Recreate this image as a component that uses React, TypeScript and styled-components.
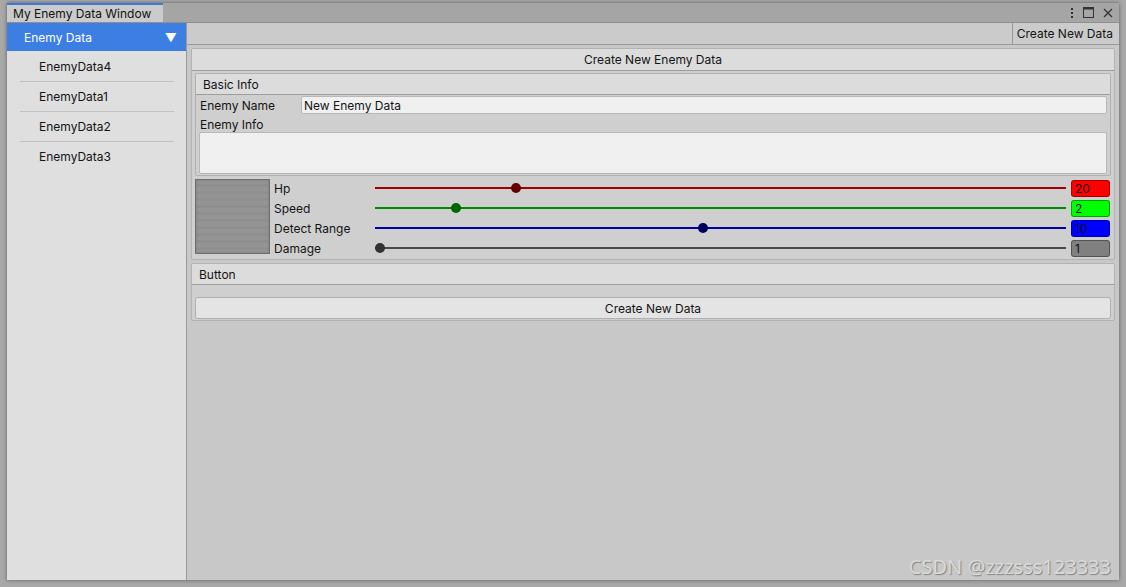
import React from "react";
import styled, { createGlobalStyle } from "styled-components";

const GlobalStyle = createGlobalStyle`
  body {
    margin: 0;
    background: #9c9c9c;
    font-family: Inter, "Noto Sans", sans-serif;
    font-size: 12px;
    color: #141414;
  }
`;

type Stat = {
  label: string;
  value: number;
  min: number;
  max: number;
  line: string;
  knob: string;
  box: string;
};

const stats: Stat[] = [
  { label: "Hp", value: 20, min: 0, max: 100, line: "#a00000", knob: "#650000", box: "#ff0000" },
  { label: "Speed", value: 2, min: 1, max: 10, line: "#008a00", knob: "#006400", box: "#00ff00" },
  { label: "Detect Range", value: 10, min: 1, max: 20, line: "#0000a8", knob: "#000060", box: "#0000ff" },
  { label: "Damage", value: 1, min: 1, max: 100, line: "#4a4a4a", knob: "#333333", box: "#808080" },
];

const items = ["EnemyData4", "EnemyData1", "EnemyData2", "EnemyData3"];

export default function App() {
  return (
    <Page>
      <GlobalStyle />
      <Window>
        <TitleBar>
          <Tab>My Enemy Data Window</Tab>
          <WindowIcons>
            <svg width="4" height="12" viewBox="0 0 4 12">
              <rect x="1" y="1" width="2" height="2" fill="#333" />
              <rect x="1" y="5" width="2" height="2" fill="#333" />
              <rect x="1" y="9" width="2" height="2" fill="#333" />
            </svg>
            <svg width="11" height="11" viewBox="0 0 11 11">
              <rect x="0.5" y="0.5" width="10" height="10" fill="none" stroke="#333" />
              <rect x="0.5" y="0.5" width="10" height="2" fill="#333" />
            </svg>
            <svg width="10" height="10" viewBox="0 0 10 10">
              <path d="M1 1 L9 9 M9 1 L1 9" stroke="#333" strokeWidth="1.3" />
            </svg>
          </WindowIcons>
        </TitleBar>
        <Body>
          <Sidebar>
            <Selected>
              <span>Enemy Data</span>
              <Arrow>▼</Arrow>
            </Selected>
            <List>
              {items.map((it) => (
                <ListItem key={it}>{it}</ListItem>
              ))}
            </List>
          </Sidebar>
          <Main>
            <Toolbar>
              <ToolButton>Create New Data</ToolButton>
            </Toolbar>
            <Content>
              <Box>
                <CenterHeader>Create New Enemy Data</CenterHeader>
                <InnerBox>
                  <Header>Basic Info</Header>
                  <FieldRow>
                    <Label>Enemy Name</Label>
                    <TextField>New Enemy Data</TextField>
                  </FieldRow>
                  <InfoLabel>Enemy Info</InfoLabel>
                  <TextArea />
                </InnerBox>
                <StatsRow>
                  <Portrait />
                  <StatList>
                    {stats.map((s) => {
                      const p = (s.value - s.min) / (s.max - s.min);
                      return (
                        <StatLine key={s.label}>
                          <StatLabel>{s.label}</StatLabel>
                          <Track $color={s.line}>
                            <Knob $color={s.knob} style={{ left: `calc(${p} * (100% - 10px))` }} />
                          </Track>
                          <ValueBox $bg={s.box}>{s.value}</ValueBox>
                        </StatLine>
                      );
                    })}
                  </StatList>
                </StatsRow>
              </Box>
              <Box>
                <Header>Button</Header>
                <ButtonArea>
                  <WideButton>Create New Data</WideButton>
                </ButtonArea>
              </Box>
            </Content>
            <Watermark>CSDN @zzzsss123333</Watermark>
          </Main>
        </Body>
      </Window>
    </Page>
  );
}

const Page = styled.div`
  width: 1126px;
  height: 587px;
  padding: 3px 0 0 7px;
  box-sizing: border-box;
  overflow: hidden;
  background: #a8a8a8;
`;

const Window = styled.div`
  width: 1112px;
  height: 577px;
  display: flex;
  flex-direction: column;
  box-shadow: 0 0 4px rgba(0, 0, 0, 0.45);
`;

const TitleBar = styled.div`
  height: 19px;
  background: #a5a5a5;
  display: flex;
  align-items: stretch;
  border-bottom: 1px solid #8f8f8f;
`;

const Tab = styled.div`
  width: 150px;
  padding-left: 6px;
  background: #cbcbcb;
  border-top: 2px solid #3a79d8;
  display: flex;
  align-items: center;
  font-size: 12px;
  color: #111;
`;

const WindowIcons = styled.div`
  margin-left: auto;
  display: flex;
  align-items: center;
  gap: 9px;
  padding-right: 6px;
`;

const Body = styled.div`
  flex: 1;
  display: flex;
  min-height: 0;
`;

const Sidebar = styled.div`
  width: 179px;
  background: #dfdfdf;
  border-right: 1px solid #9a9a9a;
  display: flex;
  flex-direction: column;
`;

const Selected = styled.div`
  height: 28px;
  background: #3d7ee3;
  color: #fff;
  display: flex;
  align-items: center;
  padding: 0 9px 0 17px;
  font-size: 12px;
`;

const Arrow = styled.span`
  margin-left: auto;
  font-size: 12px;
`;

const List = styled.div`
  padding-top: 1px;
`;

const ListItem = styled.div`
  height: 29px;
  margin: 0 12px 0 13px;
  padding-left: 19px;
  display: flex;
  align-items: center;
  border-bottom: 1px solid #c2c2c2;
  font-size: 12px;
  &:last-child {
    border-bottom: none;
  }
`;

const Main = styled.div`
  flex: 1;
  background: #c8c8c8;
  display: flex;
  flex-direction: column;
  position: relative;
`;

const Toolbar = styled.div`
  height: 21px;
  background: #cbcbcb;
  border-bottom: 1px solid #999;
  display: flex;
  justify-content: flex-end;
`;

const ToolButton = styled.div`
  padding: 0 6px 0 4px;
  border-left: 1px solid #999;
  display: flex;
  align-items: center;
  font-size: 12px;
`;

const Content = styled.div`
  padding: 3px 4px;
  display: flex;
  flex-direction: column;
  gap: 3px;
`;

const Box = styled.div`
  background: #cfcfcf;
  border: 1px solid #b2b2b2;
  border-radius: 2px;
`;

const Header = styled.div`
  height: 20px;
  background: #dcdcdc;
  border-bottom: 1px solid #9e9e9e;
  display: flex;
  align-items: center;
  padding-left: 7px;
  font-size: 12px;
`;

const CenterHeader = styled(Header)`
  justify-content: center;
  padding-left: 0;
  height: 21px;
`;

const InnerBox = styled.div`
  margin: 2px 3px 0;
  background: #cfcfcf;
  border: 1px solid #b2b2b2;
  border-radius: 2px;
  padding-bottom: 1px;
`;

const FieldRow = styled.div`
  display: flex;
  align-items: center;
  height: 18px;
  margin-top: 1px;
`;

const Label = styled.div`
  width: 105px;
  padding-left: 4px;
  box-sizing: border-box;
  font-size: 12px;
`;

const TextField = styled.div`
  flex: 1;
  height: 16px;
  margin-right: 3px;
  background: #f0f0f0;
  border: 1px solid #b8b8b8;
  border-radius: 2px;
  padding-left: 2px;
  display: flex;
  align-items: center;
  font-size: 12px;
`;

const InfoLabel = styled.div`
  height: 16px;
  padding-left: 4px;
  display: flex;
  align-items: center;
  margin-top: 2px;
`;

const TextArea = styled.div`
  height: 40px;
  margin: 0 3px;
  background: #f0f0f0;
  border: 1px solid #b8b8b8;
  border-radius: 2px;
`;

const StatsRow = styled.div`
  display: flex;
  padding: 2px 3px 1px;
  gap: 4px;
`;

const Portrait = styled.div`
  width: 73px;
  height: 73px;
  margin-top: 1px;
  border: 1px solid #6f6f6f;
  background: repeating-linear-gradient(
    180deg,
    #949494 0,
    #949494 4px,
    #8f8f8f 4px,
    #8f8f8f 7px
  );
  box-shadow: inset 0 0 2px rgba(0, 0, 0, 0.25);
`;

const StatList = styled.div`
  flex: 1;
  display: flex;
  flex-direction: column;
`;

const StatLine = styled.div`
  height: 20px;
  display: flex;
  align-items: center;
`;

const StatLabel = styled.div`
  width: 101px;
  font-size: 12px;
`;

const Track = styled.div<{ $color: string }>`
  flex: 1;
  height: 2px;
  background: ${(p) => p.$color};
  position: relative;
  margin-right: 5px;
`;

const Knob = styled.div<{ $color: string }>`
  position: absolute;
  top: -4px;
  width: 10px;
  height: 10px;
  border-radius: 50%;
  background: ${(p) => p.$color};
`;

const ValueBox = styled.div<{ $bg: string }>`
  width: 39px;
  height: 17px;
  box-sizing: border-box;
  background: ${(p) => p.$bg};
  border: 1px solid rgba(0, 0, 0, 0.35);
  border-radius: 3px;
  padding-left: 3px;
  display: flex;
  align-items: center;
  font-size: 12px;
  color: #111;
  margin-right: 1px;
`;

const ButtonArea = styled.div`
  padding: 12px 3px 1px;
`;

const WideButton = styled.div`
  height: 20px;
  background: #e4e4e4;
  border: 1px solid #b0b0b0;
  border-radius: 3px;
  display: flex;
  align-items: center;
  justify-content: center;
  font-size: 12px;
`;

const Watermark = styled.div`
  position: absolute;
  right: 8px;
  bottom: 0px;
  font-family: "Noto Sans", "DejaVu Sans", sans-serif;
  font-size: 20px;
  color: #dadada;
  text-shadow: 1px 1px 1px rgba(0, 0, 0, 0.35);
`;
